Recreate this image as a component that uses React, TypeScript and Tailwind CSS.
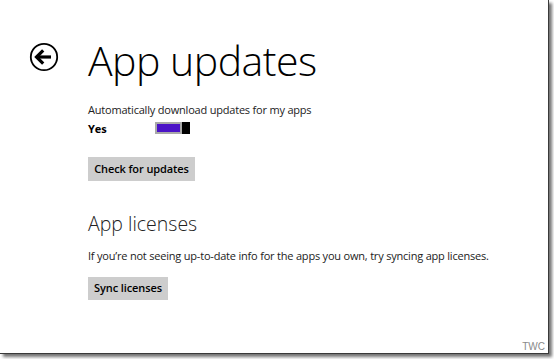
import React from "react";

export default function App() {
  return (
    <div className="w-[554px] h-[359px] bg-white relative overflow-hidden" style={{ fontFamily: '"Open Sans", "Noto Sans", sans-serif' }}>
      <div className="absolute left-0 top-0 w-[549px] h-[354px] border-r border-b border-[#3a3a3a] shadow-[3px_3px_3px_rgba(0,0,0,0.55)] bg-white">
        <div className="flex flex-col">
          <div className="flex items-center pt-[36px] h-[84px]">
            <div className="w-[88px] flex justify-center -mt-[6px]">
              <svg width="30" height="30" viewBox="0 0 30 30">
                <circle cx="15" cy="15" r="13.2" fill="none" stroke="#000" strokeWidth="1.8" />
                <path d="M8.5 15 H22" stroke="#000" strokeWidth="3.2" />
                <path d="M14.2 8.3 L7.5 15 L14.2 21.7" fill="none" stroke="#000" strokeWidth="3.2" />
              </svg>
            </div>
            <div className="text-[41px] font-light leading-none text-black tracking-[-0.5px] mt-[0px]">App updates</div>
          </div>
          <div className="pl-[88px] mt-[19px]">
            <div className="text-[11px] leading-[14px] text-[#222] tracking-[-0.2px]">Automatically download updates for my apps</div>
            <div className="flex items-center mt-[5px] h-[12px]">
              <div className="text-[11px] font-bold w-[67px] leading-none text-black">Yes</div>
              <div className="flex h-[12px]">
                <div className="w-[27px] h-[12px] border-2 border-[#a9a9a9] bg-[#4b14c7]"></div>
                <div className="w-[8px] h-[12px] bg-black"></div>
              </div>
            </div>
            <div className="mt-[23px] inline-flex items-center justify-center w-[107px] h-[24px] bg-[#cdcdcd] text-[11px] font-semibold text-black tracking-[-0.1px]">Check for updates</div>
            <div className="mt-[33px] text-[19.5px] font-light leading-none text-[#222]">App licenses</div>
            <div className="mt-[15px] text-[11px] leading-[14px] text-[#222] tracking-[-0.2px]">If you’re not seeing up-to-date info for the apps you own, try syncing app licenses.</div>
            <div className="mt-[14px] inline-flex items-center justify-center w-[80px] h-[23px] bg-[#cdcdcd] text-[11px] font-semibold text-black tracking-[-0.1px]">Sync licenses</div>
          </div>
        </div>
        <div className="absolute right-[3px] bottom-[1px] text-[10px] text-[#8a8a8a] leading-none" style={{ fontFamily: '"Liberation Sans", Arial, sans-serif' }}>TWC</div>
      </div>
    </div>
  );
}
